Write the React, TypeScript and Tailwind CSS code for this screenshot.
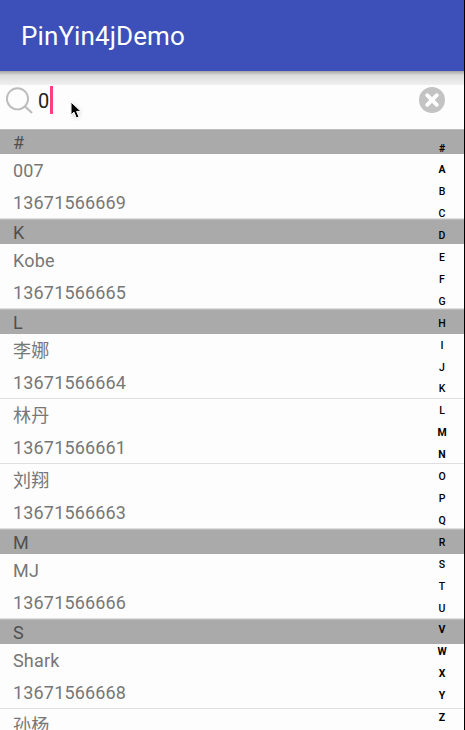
type Contact = { name: string; phone: string };
type Section = { letter: string; contacts: Contact[] };

const sections: Section[] = [
  { letter: '#', contacts: [{ name: '007', phone: '13671566669' }] },
  { letter: 'K', contacts: [{ name: 'Kobe', phone: '13671566665' }] },
  {
    letter: 'L',
    contacts: [
      { name: '李娜', phone: '13671566664' },
      { name: '林丹', phone: '13671566661' },
      { name: '刘翔', phone: '13671566663' },
    ],
  },
  { letter: 'M', contacts: [{ name: 'MJ', phone: '13671566666' }] },
  {
    letter: 'S',
    contacts: [
      { name: 'Shark', phone: '13671566668' },
      { name: '孙杨', phone: '' },
    ],
  },
];

const letters = '#ABCDEFGHIJKLMNOPQRSTUVWXYZ'.split('');
const heavyLetters = '#AMNVWXYZ';

function AppBar() {
  return (
    <header className="flex h-[71px] shrink-0 items-center bg-[#3d4fb8] pl-[21px] pt-px">
      <h1 className="text-[26px] leading-8 tracking-[0.1px] text-white">PinYin4jDemo</h1>
    </header>
  );
}

function SearchBar() {
  return (
    <div className="flex h-[44px] shrink-0 items-start">
      <svg className="ml-[5px] mt-px size-[30px]" viewBox="0 0 30 30" fill="none" stroke="#bcbcbc">
        <circle cx="12.5" cy="12.8" r="10.6" strokeWidth="1.9" />
        <path d="M20 20.5 27 27" strokeWidth="2.2" />
      </svg>
      <span className="ml-[3px] mt-[2px] w-[12px] text-[20px] leading-[28px] text-[#222]">0</span>
      <span className="mt-px h-[28px] w-[3px] bg-[#fa4080]" />
      <svg className="ml-[17px] mt-[16px] h-[20px] w-[14px]" viewBox="0 0 14 20">
        <path d="M1 1V14L4 11.2 6.3 17 9 15.8 6.6 10.4H11Z" fill="#000" stroke="#fff" strokeWidth="1" className="drop-shadow-sm" />
      </svg>
      <svg className="ml-auto mr-[19px] mt-[2px] size-[26px]" viewBox="0 0 26 26">
        <circle cx="13" cy="13" r="13" fill="#c3c3c3" />
        <path d="M8.2 8.2 17.8 17.8M17.8 8.2 8.2 17.8" stroke="#fff" strokeWidth="3.8" strokeLinecap="round" />
      </svg>
    </div>
  );
}

function ContactRow({ name, phone }: Contact) {
  return (
    <li className="h-[65px] border-b border-[#dedede] pl-[13px] text-[18px] leading-[32px] tracking-[0.17px] text-[#777]">
      <p className="h-[32px] pt-px">{name}</p>
      <p className="h-[32px] pt-px">{phone}</p>
    </li>
  );
}

function IndexBar() {
  return (
    <nav className="absolute right-[11px] top-[137.5px] flex w-[22px] flex-col text-center text-[10.5px] text-black">
      {letters.map((l) => (
        <span
          key={l}
          className={`h-[21.92px] leading-[22px] ${heavyLetters.includes(l) ? 'font-bold' : 'font-medium'}`}
        >
          {l}
        </span>
      ))}
    </nav>
  );
}

export default function App() {
  return (
    <div className="relative flex h-[730px] w-[465px] flex-col overflow-hidden border-r border-black bg-[#fdfdfd] font-[Roboto,'Noto_Sans_CJK_SC',sans-serif]">
      <AppBar />
      <div className="h-[14px] shrink-0 bg-linear-to-b from-[#a5a5a5] via-[#dcdcdc] via-30% to-[#f0f0f0]" />
      <SearchBar />
      <main className="min-h-0 flex-1 overflow-hidden">
        {sections.map((s) => (
          <section key={s.letter}>
            <h2 className="h-[25px] border-t border-[#bcbcbc] bg-[#aaa] pl-[13px] text-[18px] leading-[25px] text-[#505050]">
              {s.letter}
            </h2>
            <ul>
              {s.contacts.map((c) => (
                <ContactRow key={c.name} {...c} />
              ))}
            </ul>
          </section>
        ))}
      </main>
      <IndexBar />
    </div>
  );
}
